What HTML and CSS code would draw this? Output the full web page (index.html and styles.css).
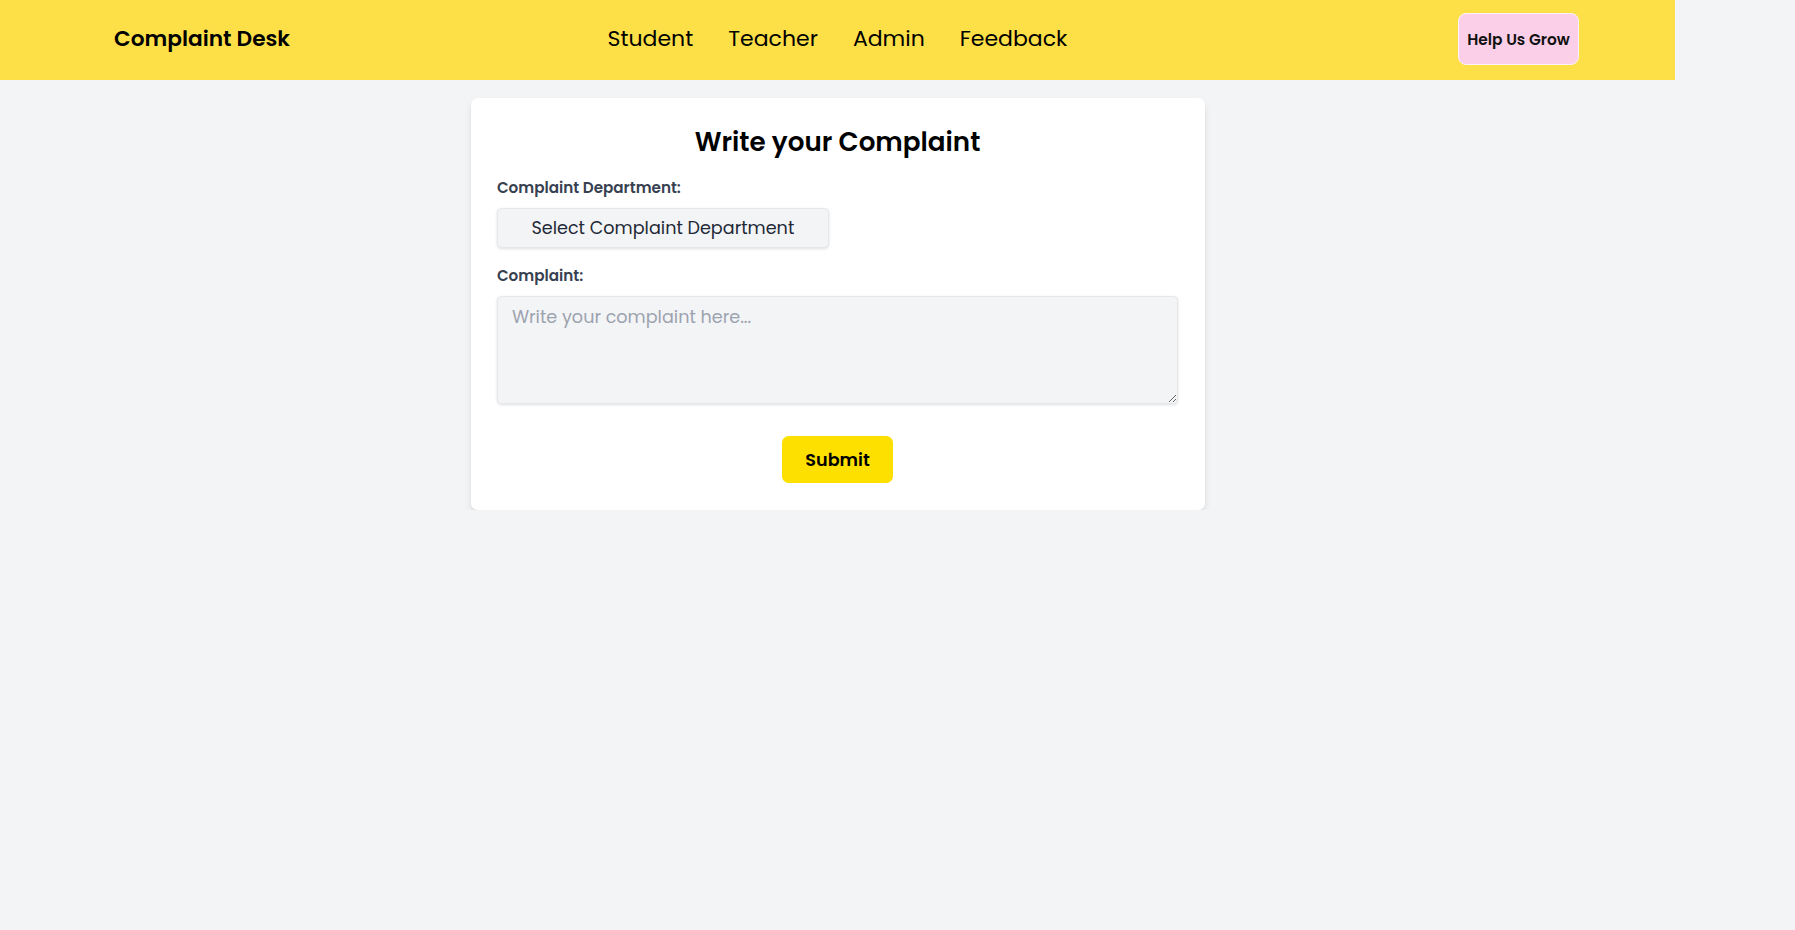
FILE: index.html
```html
<!DOCTYPE html>
<html lang="en">
<head>
<meta charset="utf-8">
<title>Complaint Desk</title>
<link rel="stylesheet" href="styles.css">
</head>
<body>
<div class="page">
  <header class="topbar">
    <div class="brand">Complaint Desk</div>
    <nav class="nav">
      <a href="#" class="nav-link">Student</a>
      <a href="#" class="nav-link">Teacher</a>
      <a href="#" class="nav-link">Admin</a>
      <a href="#" class="nav-link">Feedback</a>
    </nav>
    <div class="topbar-end">
      <button class="grow-btn" type="button">Help Us Grow</button>
    </div>
  </header>
  <main class="main">
    <form class="card">
      <h1 class="card-title">Write your Complaint</h1>
      <label class="field-label">Complaint Department:</label>
      <button class="dept-select" type="button">Select Complaint Department</button>
      <label class="field-label second">Complaint:</label>
      <textarea class="complaint-box" placeholder="Write your complaint here..."></textarea>
      <div class="actions">
        <button class="submit-btn" type="button">Submit</button>
      </div>
    </form>
  </main>
</div>
</body>
</html>
```

FILE: styles.css
```css
* { box-sizing: border-box; }
html, body {
  margin: 0;
  padding: 0;
  background: #f3f4f6;
  font-family: "Poppins", "Open Sans", "Noto Sans", sans-serif;
  color: #000;
}
.page {
  width: 1675px;
}
.topbar {
  height: 80px;
  background: #fde047;
  display: grid;
  grid-template-columns: 1fr auto 1fr;
  align-items: center;
  padding: 0 96px;
}
.brand {
  margin-left: 18px;
  margin-bottom: 2px;
  font-size: 21.7px;
  font-weight: 600;
  line-height: 1;
}
.nav {
  display: flex;
  gap: 35px;
  margin-bottom: 1px;
}
.nav-link {
  color: #000;
  text-decoration: none;
  font-size: 22px;
  line-height: 1.4;
  font-weight: 400;
}
.topbar-end {
  display: flex;
  justify-content: flex-end;
}
.grow-btn {
  width: 121px;
  height: 52px;
  margin-bottom: 2px;
  background: #fbcfe8;
  border: 1px solid #fdf2f8;
  border-radius: 8px;
  font-family: inherit;
  font-size: 15.4px;
  font-weight: 600;
  color: #111;
  padding: 0;
}
.main {
  display: flex;
  justify-content: center;
  padding-top: 17.6px;
}
.card {
  width: 734px;
  background: #fff;
  border-radius: 6.6px;
  box-shadow: 0 4px 8px -1px rgba(0,0,0,0.1), 0 2px 4px -2px rgba(0,0,0,0.1);
  padding: 26.4px;
  display: flex;
  flex-direction: column;
}
.card-title {
  margin: 0 0 17.6px;
  text-align: center;
  font-size: 26.2px;
  line-height: 35.2px;
  font-weight: 600;
}
.field-label {
  display: block;
  margin-bottom: 8.8px;
  font-size: 15.2px;
  line-height: 22px;
  font-weight: 600;
  color: #374151;
}
.field-label.second {
  margin-top: 17.6px;
}
.dept-select {
  width: 332px;
  height: 40px;
  background: #f3f4f6;
  border: 1px solid #e5e7eb;
  border-radius: 4.4px;
  box-shadow: 0 1px 3px rgba(0,0,0,0.12);
  font-family: inherit;
  font-size: 17.6px;
  color: #1f2937;
  text-align: center;
  padding: 0;
}
.complaint-box {
  display: block;
  width: 100%;
  height: 108px;
  background: #f3f4f6;
  border: 1px solid #e5e7eb;
  border-radius: 4.4px;
  box-shadow: 0 1px 3px rgba(0,0,0,0.12);
  font-family: inherit;
  font-size: 17.6px;
  line-height: 26.4px;
  padding: 7px 14px;
  color: #1f2937;
  resize: vertical;
}
.complaint-box::placeholder {
  color: #9ca3af;
}
.actions {
  display: flex;
  justify-content: center;
  margin-top: 32.2px;
}
.submit-btn {
  width: 111px;
  height: 47px;
  background: #fde000;
  border: none;
  border-radius: 6.6px;
  font-family: inherit;
  font-size: 17.6px;
  font-weight: 600;
  color: #000;
}
```
